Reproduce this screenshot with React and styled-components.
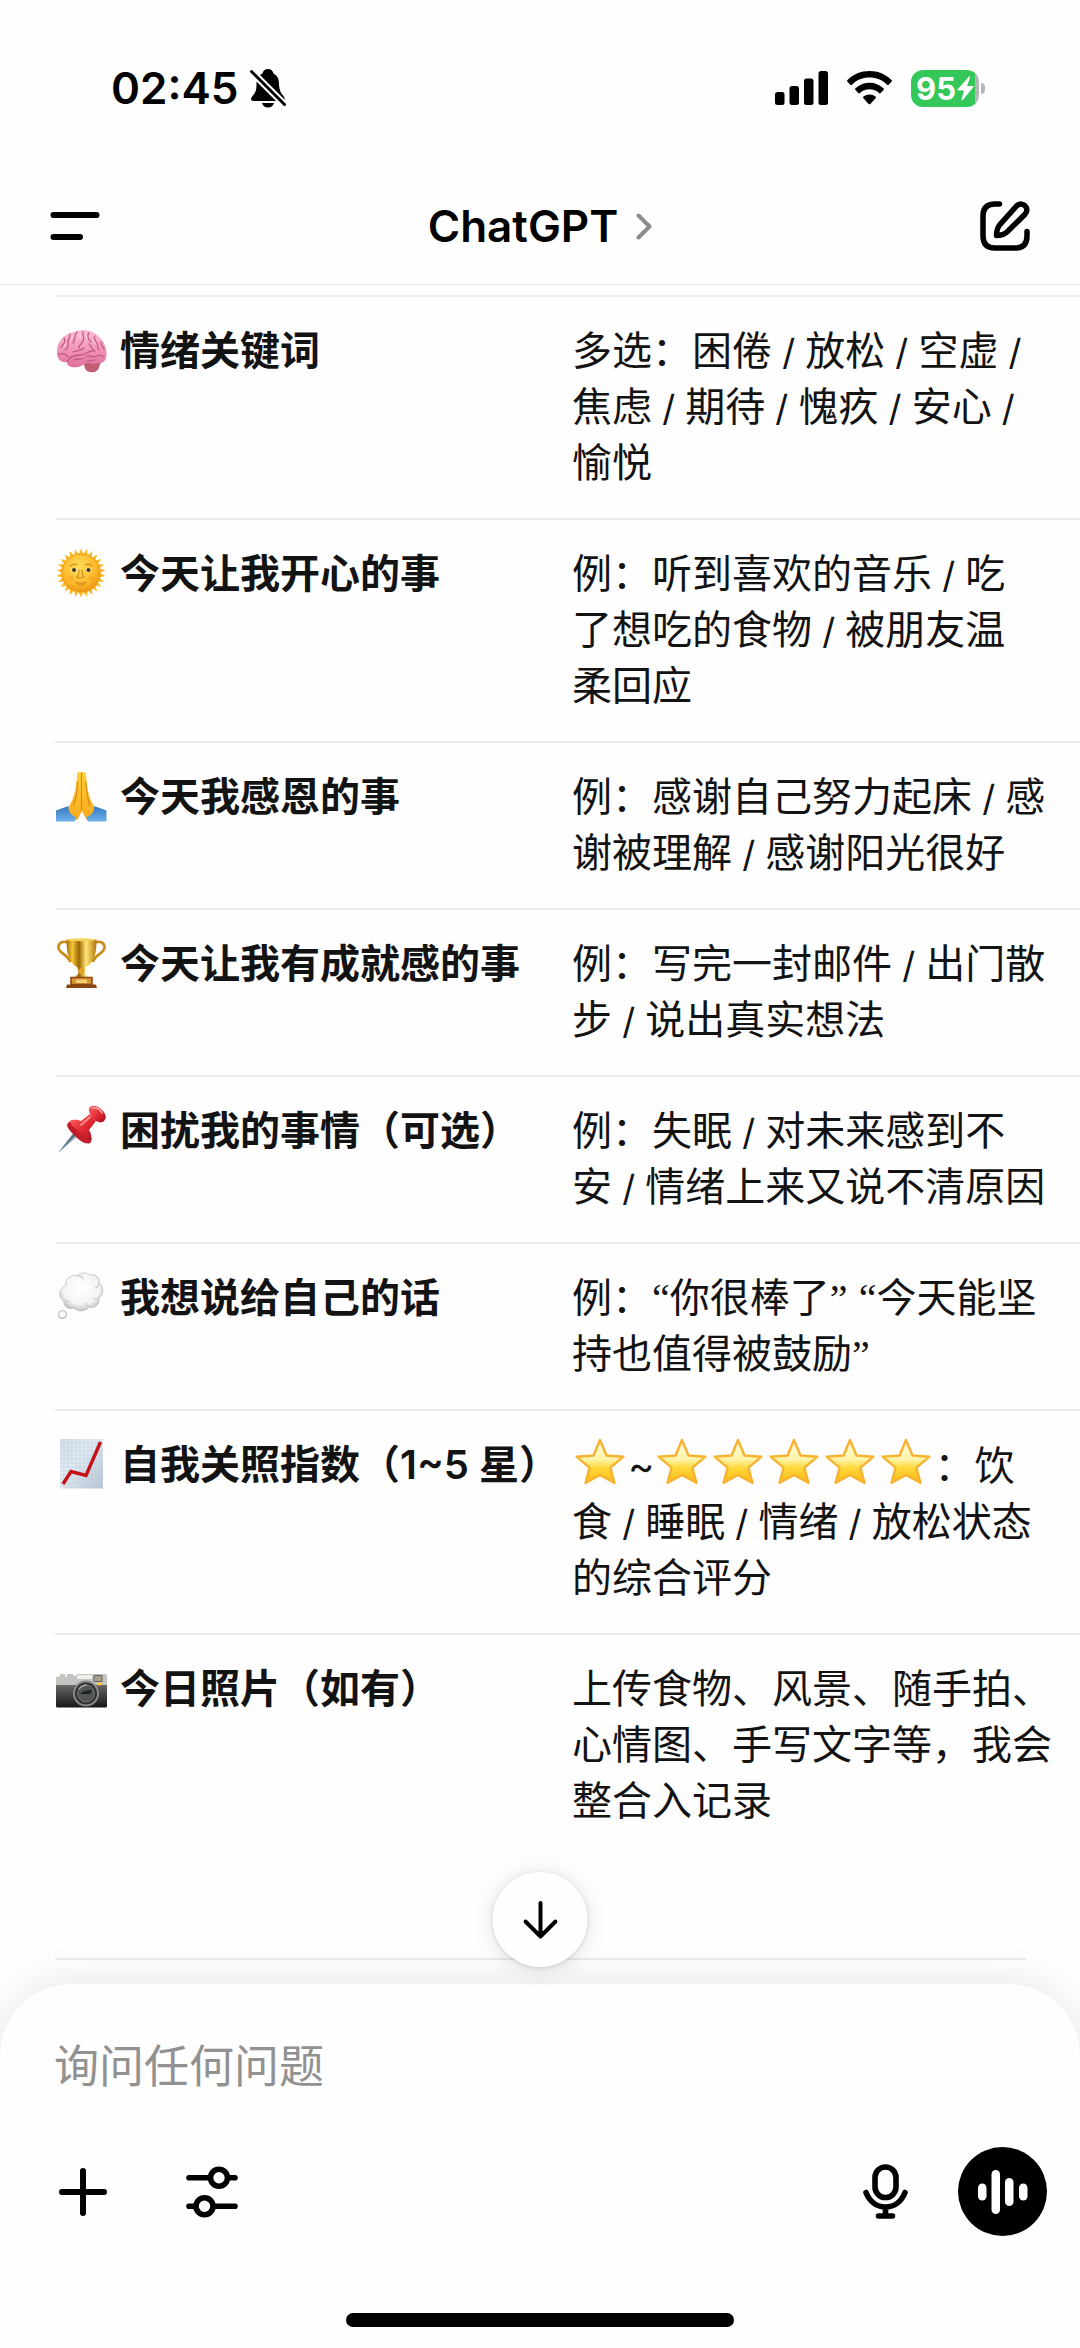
import * as React from 'react'
import styled, { createGlobalStyle } from 'styled-components'

const ink = '#131313'
const surface = '#fefefe'
const line = '#ececec'
const sidePadding = 55
const lineHeight = 56

const GlobalStyle = createGlobalStyle`
  * {
    box-sizing: border-box;
  }

  body {
    margin: 0;
    background: ${surface};
    color: ${ink};
    font-family: Inter, "Noto Sans CJK SC", sans-serif;
  }

  svg {
    display: block;
    flex: none;
  }
`

const Screen = styled.div`
  min-height: 100vh;
  display: flex;
  flex-direction: column;
  overflow: hidden;
`

const StatusBar = styled.div`
  height: 168px;
  padding: 8px 95px 0 111px;
  display: flex;
  align-items: center;
  justify-content: space-between;
  color: #000;
`

const StatusGroup = styled.div`
  display: flex;
  align-items: center;
  gap: ${props => props.$gap}px;
`

const Clock = styled.time`
  font-size: 44px;
  line-height: ${lineHeight}px;
  font-weight: 600;
`

const Battery = styled.div`
  display: flex;
  align-items: center;
  gap: 2px;
`

const BatteryBody = styled.div`
  width: 68px;
  height: 37px;
  border-radius: 12px;
  display: flex;
  align-items: center;
  justify-content: center;
  gap: 1px;
  background: linear-gradient(to right, #34c759 94%, #b5b5b5 94%);
  color: #fff;
  font-size: 31px;
  line-height: 37px;
  font-weight: 700;
`

const BatteryTip = styled.div`
  width: 4px;
  height: 11px;
  border-radius: 0 4px 4px 0;
  background: #b5b5b5;
`

const NavBar = styled.header`
  height: 117px;
  padding: 0 50px;
  display: grid;
  grid-template-columns: 1fr auto 1fr;
  align-items: center;
  border-bottom: 1px solid #e4e4e4;
`

const IconButton = styled.button`
  display: flex;
  padding: 0;
  border: 0;
  background: none;
  color: #000;
  justify-self: ${props => props.$side || 'auto'};
`

const TitleButton = styled(IconButton)`
  align-items: center;
  gap: 18px;
  font-family: inherit;
  font-size: 44px;
  line-height: ${lineHeight}px;
  font-weight: 600;
`

const Conversation = styled.main`
  position: relative;
  flex: 1;
  padding: 10px 0 0 ${sidePadding}px;
`

const Table = styled.table`
  width: 100%;
  table-layout: fixed;
  border-spacing: 0;
  font-size: 40px;
  line-height: ${lineHeight}px;
  white-space: nowrap;

  th, td {
    padding: 26px 0 27px;
    border-top: 2px solid ${line};
    text-align: left;
    vertical-align: top;
  }

  th {
    width: 517px;
    font-weight: 600;
  }
`

const Label = styled.div`
  display: flex;
  align-items: center;
  gap: 13px;
`

const Slash = styled.span`
  font-size: 36px;
  line-height: 1;
  white-space: pre;
`

const Quote = styled.span`
  font-family: "Liberation Serif", serif;
  line-height: 1;
`

const StarIcon = styled.svg`
  display: inline-block;
  vertical-align: -7px;
`

const Rule = styled.hr`
  height: 2px;
  margin: 102px 54px 0 0;
  border: 0;
  background: ${line};
`

const ScrollButton = styled.button`
  position: absolute;
  left: 50%;
  bottom: 17px;
  transform: translateX(-50%);
  z-index: 2;
  width: 95px;
  height: 95px;
  padding: 0;
  display: flex;
  align-items: center;
  justify-content: center;
  border: 0;
  border-radius: 50%;
  background: ${surface};
  box-shadow: 0 2px 22px rgba(0, 0, 0, 0.12), 0 1px 4px rgba(0, 0, 0, 0.12);
`

const Composer = styled.form`
  position: relative;
  z-index: 1;
  padding-top: 54px;
  border-radius: 72px 72px 0 0;
  background: ${surface};
  box-shadow: 0 0 44px rgba(0, 0, 0, 0.1);
`

const PromptInput = styled.input`
  display: block;
  width: 100%;
  height: ${lineHeight}px;
  padding: 0 54px;
  border: 0;
  outline: 0;
  background: none;
  color: ${ink};
  font-family: inherit;
  font-size: 45px;

  &::placeholder {
    color: #919191;
    opacity: 1;
  }
`

const Controls = styled.div`
  margin-top: 53px;
  padding: 0 33px 0 59px;
  display: flex;
  align-items: center;
  justify-content: space-between;
`

const ControlGroup = styled.div`
  display: flex;
  align-items: center;
  gap: ${props => props.$gap}px;
`

const VoiceButton = styled(IconButton)`
  width: 89px;
  height: 89px;
  align-items: center;
  justify-content: center;
  border-radius: 50%;
  background: #000;
  color: #fff;
`

const HomeBar = styled.div`
  width: 36%;
  height: 14px;
  margin: 77px auto 21px;
  border-radius: 7px;
  background: #000;
`

function spikes(cx, cy, outer, inner, count) {
  const points = []
  for (let i = 0; i < count * 2; i++) {
    const r = i % 2 ? inner : outer
    const a = (Math.PI * i) / count - Math.PI / 2
    points.push(`${(cx + r * Math.cos(a)).toFixed(1)},${(cy + r * Math.sin(a)).toFixed(1)}`)
  }
  return points.join(' ')
}

function Emoji({ name, children }) {
  return (
    <svg width="52" height="52" viewBox="0 0 52 52" role="img" aria-label={name}>
      {children}
    </svg>
  )
}

const Brain = () => (
  <Emoji name="🧠">
    <defs>
      <linearGradient id="brain" x1="0" y1="0" x2="0" y2="1">
        <stop offset="0" stopColor="#ffbdd3" />
        <stop offset="1" stopColor="#e0709c" />
      </linearGradient>
    </defs>
    <path d="M28 38c2 2 1 7 5 8.500 5 2 10 0 11-4l2-6z" fill="#c25e74" />
    <path d="M2 28C1 19 7 10 17 7.500 26 3 38 4.500 44 12c6 5 9 14 7 21-1 4-5 6-8 5-4 2-9 0-12-1-2 4-9 6-14 5-3-.5-5-2-5-5C6 38 2 34 2 28z" fill="url(#brain)" />
    <g fill="none" stroke="#c4588a" strokeWidth="1.300" strokeLinecap="round">
      <path d="M4 29c4-1 7 0 9 3M9 13c2 4 0 6-3 9M15 9c0 5-3 6-2 11 0 3-1 4-3 5M22 7c-4 4-1 7-4 11M28 7c-1 4 2 5 0 9-1 3-4 3-4 7M34 8c-3 4 0 6 2 9M40 11c-2 3 0 5 2 7 1 2 0 5 2 7M46 17c-1 3 2 4 3 7M12 37c2-5 7-7 13-7 6 0 7-4 13-4M18 27c4-2 8-1 11-4M32 31c4-1 5 2 9 0 3-1 5-1 8 1M31 37c3-2 6-1 9-2M34 19c3 3 2 5 6 7M19 35c4-2 7 0 10-2" />
    </g>
    <g stroke="#ffe0ea" strokeWidth="1" fill="none" strokeLinecap="round" opacity=".8">
      <path d="M18 10l-2 5M25 8v5M31 9l1 4M11 17l-2 5M38 14l2 4" />
    </g>
  </Emoji>
)

const SunFace = () => (
  <Emoji name="🌞">
    <defs>
      <radialGradient id="sun" cx=".45" cy=".35" r=".65">
        <stop offset="0" stopColor="#ffdf5e" />
        <stop offset=".7" stopColor="#fbb829" />
        <stop offset="1" stopColor="#ec9713" />
      </radialGradient>
    </defs>
    <polygon points={spikes(26, 25, 24.5, 19, 26)} fill="#fcb822" />
    <circle cx="26" cy="25" r="19" fill="url(#sun)" stroke="#e99518" strokeWidth=".8" />
    <path d="M15 18q4-3 7-1M30 17q4-2 7 1M24 22q0 5-2 7 2 2 7 0-2-2-2-7" fill="none" stroke="#d78a17" strokeWidth="1.200" strokeLinecap="round" />
    <ellipse cx="19" cy="22" rx="3" ry="2.300" fill="#faeebb" />
    <ellipse cx="33.500" cy="22" rx="3" ry="2.300" fill="#faeebb" />
    <circle cx="19" cy="22" r="2.100" fill="#493412" />
    <circle cx="33.500" cy="22" r="2.100" fill="#493412" />
    <path d="M21 34.500q5 1.500 10 0-2 3-5 3t-5-3z" fill="#f0ab35" stroke="#cf8416" strokeWidth=".8" />
    <ellipse cx="16" cy="30" rx="3.500" ry="2.500" fill="#f79b25" opacity=".4" />
    <ellipse cx="37" cy="30" rx="3.500" ry="2.500" fill="#f79b25" opacity=".4" />
  </Emoji>
)

const Hands = () => (
  <Emoji name="🙏">
    <defs>
      <linearGradient id="skin" x1="0" y1="0" x2="0" y2="1">
        <stop offset="0" stopColor="#ffcf3a" />
        <stop offset="1" stopColor="#f8a81b" />
      </linearGradient>
      <linearGradient id="sleeve" x1="0" y1="0" x2="0" y2="1">
        <stop offset="0" stopColor="#3478bd" />
        <stop offset="1" stopColor="#6eb1ea" />
      </linearGradient>
    </defs>
    <path d="M26 1.500c-2-1-4-.5-4 2-.5 11-2 19-5 26l-5 10 10 10 5-9.500 5 9.500 9-10-5-10c-3-7-4-15-5-26 0-2.500-3-3-5-2z" fill="url(#skin)" />
    <path d="M26.500 2v37M22.500 11c0 9-1 16-4 23M30.500 11c1 9 2 16 4 23" fill="none" stroke="#d98a12" strokeWidth="1.200" strokeLinecap="round" />
    <path d="M1 39.500l12.500-4.500c-1 6 4 10 8 11.500L19.500 50.500H1zM51.500 39.500L39 35c1 6-4 10-8 11.500l2 4h18.500z" fill="url(#sleeve)" />
  </Emoji>
)

const Trophy = () => (
  <Emoji name="🏆">
    <defs>
      <linearGradient id="gold">
        <stop offset="0" stopColor="#a96b04" />
        <stop offset=".2" stopColor="#f3c63a" />
        <stop offset=".42" stopColor="#9b6500" />
        <stop offset=".65" stopColor="#ffe878" />
        <stop offset="1" stopColor="#b37408" />
      </linearGradient>
    </defs>
    <path d="M13 5C8 2 3 5 3.500 10c1 6 8 5 12 14M40 5c5-3 10 0 9.500 5-1 6-8 5-12 14" fill="none" stroke="#c78d18" strokeWidth="2.600" />
    <path d="M11.500 1.500h30c0 14-2 23-11 28l-1 6 4 4h-14l4-4-1-6C13 24 11.500 14 11.500 1.500z" fill="url(#gold)" />
    <ellipse cx="26.500" cy="1.800" rx="15" ry="1.500" fill="#f4d35c" />
    <circle cx="26.500" cy="33" r="3" fill="#e0a62a" />
    <path d="M16 39.500h21v7H16z" fill="#d89432" stroke="#8c4a13" strokeWidth="1.600" />
    <path d="M21 41.500h11v3.500H21z" fill="#f4cf74" />
    <path d="M12 46.500h29l1 3.500H11z" fill="#8a4513" />
  </Emoji>
)

const Pin = () => (
  <Emoji name="📌">
    <defs>
      <linearGradient id="pin" x1="0" y1="0" x2="1" y2="1">
        <stop offset="0" stopColor="#fb6a64" />
        <stop offset=".5" stopColor="#e52d36" />
        <stop offset="1" stopColor="#a80f1e" />
      </linearGradient>
    </defs>
    <path d="M19 27L3 48l20-17z" fill="#9fb3bf" />
    <path d="M19.500 27.500L3 48l18-18z" fill="#55707f" />
    <path d="M13 18c5-5 13 0 18 6 6 6 7 12 4 14-4 2-10-2-15-7s-10-10-7-13z" fill="#c01e2b" />
    <path d="M15 16c3-2 8-1 11 0l9-7 6 7-7 9c2 3 3 7 2 10-4-1-9-5-13-9s-8-7-8-10z" fill="url(#pin)" />
    <path d="M35 2c4-3 9 0 12 3 4 4 5 8 2 11s-8 1-11-3-6-8-3-11z" fill="url(#pin)" />
    <path d="M38 3c3-1 7 1 9 5" fill="none" stroke="#ffaaa5" strokeWidth="1.600" strokeLinecap="round" />
    <path d="M26 20l9-8" stroke="#ff8e88" strokeWidth="2" strokeLinecap="round" />
  </Emoji>
)

const Thought = () => (
  <Emoji name="💭">
    <defs>
      <radialGradient id="cloud" cx=".5" cy=".4" r=".6">
        <stop offset="0" stopColor="#ffffff" />
        <stop offset=".7" stopColor="#f4f4f4" />
        <stop offset="1" stopColor="#c2c2c2" />
      </radialGradient>
    </defs>
    <path d="M11 13c-1-7 6-11 11-9 4-4 10-4 13-1 6-1 10 3 9 8 5 4 5 11 0 15 1 6-4 11-10 9-4 5-12 5-15 1-6 2-11-2-10-7-6-3-6-12 2-16z" fill="url(#cloud)" stroke="#bdbdbd" strokeWidth=".8" />
    <path d="M22 4q5-1 6 3M44 11q0 4-4 5M44 26q-3 2-6 0M34 35q-3-1-3-4M9 29q2 1 5 0" fill="none" stroke="#cacaca" strokeWidth="1.200" strokeLinecap="round" />
    <circle cx="7.500" cy="42.500" r="4" fill="url(#cloud)" stroke="#aaa" strokeWidth=".8" />
  </Emoji>
)

const Chart = () => (
  <Emoji name="📈">
    <defs>
      <linearGradient id="paper" x1="0" y1="0" x2="1" y2="1">
        <stop offset="0" stopColor="#cfdde9" />
        <stop offset=".4" stopColor="#e4ecf3" />
        <stop offset="1" stopColor="#b4c3d2" />
      </linearGradient>
    </defs>
    <path d="M5 0h43v49.500H5z" fill="url(#paper)" />
    <path d="M9 0v49M13 0v49M17 0v49M21 0v49M25 0v49M29 0v49M33 0v49M37 0v49M41 0v49M45 0v49M5 4h43M5 8h43M5 12h43M5 16h43M5 20h43M5 24h43M5 28h43M5 32h43M5 36h43M5 40h43M5 44h43" stroke="#b9cddf" strokeWidth=".5" />
    <path d="M8 45l8-12.500 15 4L45.500 3" fill="none" stroke="#c51118" strokeWidth="3.400" />
  </Emoji>
)

const Camera = () => (
  <Emoji name="📷">
    <defs>
      <linearGradient id="camera" x1="0" y1="0" x2="0" y2="1">
        <stop offset="0" stopColor="#6b6b6b" />
        <stop offset="1" stopColor="#151515" />
      </linearGradient>
    </defs>
    <path d="M1 21h51v22q0 1.500-1.500 1.500h-48Q1 44.500 1 43z" fill="url(#camera)" />
    <path d="M1 15q0-1.500 2-1.500h2V11h5v2.500h2V11h6l1 2.500 4-2.500h14l1 0h12q2 0 2 2v9H1z" fill="#c3c3c0" />
    <path d="M22 12h15v4H22z" fill="#f0efe8" />
    <path d="M39 12.500h8v6h-8z" fill="#aaa28f" stroke="#66635c" strokeWidth="1" />
    <circle cx="44.500" cy="21" r="1.700" fill="#ffc928" />
    <circle cx="31" cy="30.500" r="13" fill="#8a8a8a" />
    <circle cx="31" cy="30.500" r="11" fill="#2f2f2f" />
    <circle cx="31" cy="30.500" r="8.500" fill="#525555" stroke="#777" strokeWidth="1" />
    <path d="M25 31q3-4 12-4l-2 4z" fill="#1d1f20" />
    <path d="M24 26q3-4 8-4" stroke="#a9a9a9" strokeWidth="1.500" fill="none" />
  </Emoji>
)

const Star = () => (
  <StarIcon width="56" height="50" viewBox="0 0 56 50" role="img" aria-label="⭐">
    <defs>
      <linearGradient id="star" x1="0" y1="0" x2="0" y2="1">
        <stop offset="0" stopColor="#fffbe0" />
        <stop offset=".45" stopColor="#fff4a8" />
        <stop offset=".65" stopColor="#ffd83c" />
        <stop offset="1" stopColor="#fdb813" />
      </linearGradient>
    </defs>
    <path d="M28 3l6.500 15.500 17 1.200-13 11L42.500 46 28 38 13.500 46l4-15.300-13-11 17-1.200z" fill="url(#star)" stroke="#f8b232" strokeWidth="2.400" strokeLinejoin="round" />
  </StarIcon>
)

const rows = [
  { icon: Brain, label: '情绪关键词', lines: ['多选：困倦 / 放松 / 空虚 /', '焦虑 / 期待 / 愧疚 / 安心 /', '愉悦'] },
  { icon: SunFace, label: '今天让我开心的事', lines: ['例：听到喜欢的音乐 / 吃', '了想吃的食物 / 被朋友温', '柔回应'] },
  { icon: Hands, label: '今天我感恩的事', lines: ['例：感谢自己努力起床 / 感', '谢被理解 / 感谢阳光很好'] },
  { icon: Trophy, label: '今天让我有成就感的事', lines: ['例：写完一封邮件 / 出门散', '步 / 说出真实想法'] },
  { icon: Pin, label: '困扰我的事情（可选）', lines: ['例：失眠 / 对未来感到不', '安 / 情绪上来又说不清原因'] },
  { icon: Thought, label: '我想说给自己的话', lines: ['例：“你很棒了” “今天能坚', '持也值得被鼓励”'] },
  { icon: Chart, label: '自我关照指数（1~5 星）', lines: ['⭐~⭐⭐⭐⭐⭐：饮', '食 / 睡眠 / 情绪 / 放松状态', '的综合评分'] },
  { icon: Camera, label: '今日照片（如有）', lines: ['上传食物、风景、随手拍、', '心情图、手写文字等，我会', '整合入记录'] },
]

// Stars, slashes and quotes each get their own glyph style inside a line
function RichLine({ text }) {
  return text.split(/( \/ ?|[“”⭐])/).map((part, i) => {
    if (part === '⭐') return <Star key={i} />
    if (part === '“' || part === '”') return <Quote key={i}>{part}</Quote>
    if (part.startsWith(' /')) return <Slash key={i}>{part}</Slash>
    return part
  })
}

function Status() {
  return (
    <StatusBar>
      <StatusGroup $gap={12}>
        <Clock>02:45</Clock>
        <svg width="36" height="40" viewBox="0 0 36 40" aria-label="静音">
          <path d="M18 1c-3 0-5 2-5.500 4.500C7 8 6.500 12 6.500 17c0 6-1.500 8-4 11C0 31 1 33 3.500 33h29c2.500 0 3-2 1-5-3-3-4-6-4.500-11 0-6-1-9-5.500-11.500C23 3 21 1 18 1z" />
          <path d="M12 35h12c-1 3-3 4.500-6 4.500S13 38 12 35z" />
          <path d="M0 2l36 36" stroke={surface} strokeWidth="7" />
          <path d="M1.500 3.500l33 33" stroke="currentColor" strokeWidth="3" strokeLinecap="round" />
        </svg>
      </StatusGroup>
      <StatusGroup $gap={19}>
        <svg width="53" height="34" viewBox="0 0 53 34" aria-label="信号">
          <rect x="0" y="21" width="9.500" height="13" rx="2.500" />
          <rect x="14.500" y="15" width="9.500" height="19" rx="2.500" />
          <rect x="29" y="7.500" width="9.500" height="26.500" rx="2.500" />
          <rect x="43.500" y="0" width="9.500" height="34" rx="2.500" />
        </svg>
        <svg width="45" height="34" viewBox="0 0 45 34" aria-label="Wi-Fi">
          <path d="M22.500 0C14 0 6 3.300.5 9c-.6.6-.6 1.200 0 1.800l2.800 2.900c.5.500 1.200.5 1.700 0C9.500 9 15.800 6.500 22.500 6.500S35.500 9 40 13.700c.5.500 1.200.5 1.700 0l2.800-2.900c.6-.6.6-1.200 0-1.800C39 3.300 31 0 22.500 0z" />
          <path d="M22.500 11.800c-5.300 0-10.200 2-14 5.500-.6.600-.6 1.200 0 1.800l2.800 2.900c.5.500 1.200.5 1.700 0 2.600-2.400 5.900-3.700 9.500-3.700s6.900 1.300 9.500 3.700c.5.500 1.200.5 1.700 0l2.800-2.900c.6-.6.6-1.200 0-1.800-3.800-3.500-8.700-5.500-14-5.500z" />
          <path d="M22.500 23.500c-2.300 0-4.300.8-6 2.100-.6.500-.6 1.200-.1 1.700l5.200 5.600c.5.600 1.300.6 1.800 0l5.200-5.600c.5-.5.5-1.200-.1-1.700-1.700-1.300-3.700-2.100-6-2.100z" />
        </svg>
        <Battery>
          <BatteryBody>
            95
            <svg width="17" height="25" viewBox="0 0 17 25" fill="#fff" aria-hidden="true">
              <path d="M12 .5L.5 13.500c-.4.600-.2 1 .5 1h6L4.500 23.500c-.2 1 .6 1.300 1.200.6L16.500 11c.5-.6.2-1.100-.5-1.100h-6L13.200 1.200C13.500.3 12.700-.2 12 .5z" />
            </svg>
          </BatteryBody>
          <BatteryTip />
        </Battery>
      </StatusGroup>
    </StatusBar>
  )
}

function Header() {
  return (
    <NavBar>
      <IconButton type="button" aria-label="菜单" $side="start">
        <svg width="50" height="30" viewBox="0 0 50 30" stroke="currentColor" strokeWidth="6" strokeLinecap="round">
          <path d="M3.500 4h43M3.500 26h26.500" />
        </svg>
      </IconButton>
      <TitleButton type="button">
        ChatGPT
        <svg width="16" height="27" viewBox="0 0 16 27" fill="none" stroke="#8c8c8c" strokeWidth="4" strokeLinecap="round" strokeLinejoin="round">
          <path d="M2.500 2.500L13.500 13.500 2.500 24.500" />
        </svg>
      </TitleButton>
      <IconButton type="button" aria-label="新聊天" $side="end">
        <svg width="50" height="50" viewBox="0 0 50 50" fill="none" stroke="currentColor" strokeWidth="5.500" strokeLinecap="round" strokeLinejoin="round">
          <path d="M19.500 3H15C7 3 3 7 3 15v20c0 8 4 12 12 12h20c8 0 12-4 12-12v-4.500" />
          <path d="M36.500 5c2.500-2.600 6-2.600 8.500-.2 2.500 2.500 2.500 6-.2 8.700L27 31c-3.500 3.200-6.500 3.500-10.500 3.500 0-4 .4-7.500 3.500-11z" />
        </svg>
      </IconButton>
    </NavBar>
  )
}

function JournalTable() {
  return (
    <Table>
      <tbody>
        {rows.map(({ icon: Icon, label, lines }) => (
          <tr key={label}>
            <th scope="row">
              <Label>
                <Icon />
                <span>{label}</span>
              </Label>
            </th>
            <td>
              {lines.map((text, i) => (
                <React.Fragment key={text}>
                  {i > 0 && <br />}
                  <RichLine text={text} />
                </React.Fragment>
              ))}
            </td>
          </tr>
        ))}
      </tbody>
    </Table>
  )
}

function PromptBar() {
  return (
    <Composer onSubmit={e => e.preventDefault()}>
      <PromptInput type="text" placeholder="询问任何问题" aria-label="询问任何问题" />
      <Controls>
        <ControlGroup $gap={79}>
          <IconButton type="button" aria-label="添加">
            <svg width="48" height="48" viewBox="0 0 48 48" stroke="currentColor" strokeWidth="6" strokeLinecap="round">
              <path d="M24 3v42M3 24h42" />
            </svg>
          </IconButton>
          <IconButton type="button" aria-label="工具">
            <svg width="52" height="52" viewBox="0 0 52 52" fill="none" stroke="currentColor" strokeWidth="5.600" strokeLinecap="round">
              <path d="M3 11.800h20M43 11.800h6M3 40.200h6M29 40.200h20" />
              <circle cx="33" cy="11.800" r="8.500" />
              <circle cx="18.500" cy="40.200" r="8.500" />
            </svg>
          </IconButton>
        </ControlGroup>
        <ControlGroup $gap={50}>
          <IconButton type="button" aria-label="语音输入">
            <svg width="45" height="55" viewBox="0 0 45 55" fill="none" stroke="currentColor" strokeWidth="5.600" strokeLinecap="round">
              <rect x="12" y="3" width="21" height="30.500" rx="10.500" />
              <path d="M3 28.500C6.500 37.500 13.500 43 22.500 43S38.500 37.500 42 28.500M22.500 43v9M15.500 52h14" />
            </svg>
          </IconButton>
          <VoiceButton type="button" aria-label="语音模式">
            <svg width="50" height="46" viewBox="0 0 50 46" fill="currentColor">
              <rect x="0" y="14.500" width="8.500" height="17" rx="4.250" />
              <rect x="13.500" y="1" width="8.500" height="44" rx="4.250" />
              <rect x="27" y="9" width="8.500" height="28" rx="4.250" />
              <rect x="41" y="14.500" width="8.500" height="17" rx="4.250" />
            </svg>
          </VoiceButton>
        </ControlGroup>
      </Controls>
      <HomeBar />
    </Composer>
  )
}

export default function App() {
  return (
    <Screen lang="zh-CN">
      <GlobalStyle />
      <Status />
      <Header />
      <Conversation>
        <JournalTable />
        <Rule />
        <ScrollButton type="button" aria-label="滚动到底部">
          <svg width="34" height="38" viewBox="0 0 34 38" fill="none" stroke="#000" strokeWidth="4" strokeLinecap="round" strokeLinejoin="round">
            <path d="M17 2v33M2 20.500L17 35.500 32 20.500" />
          </svg>
        </ScrollButton>
      </Conversation>
      <PromptBar />
    </Screen>
  )
}
